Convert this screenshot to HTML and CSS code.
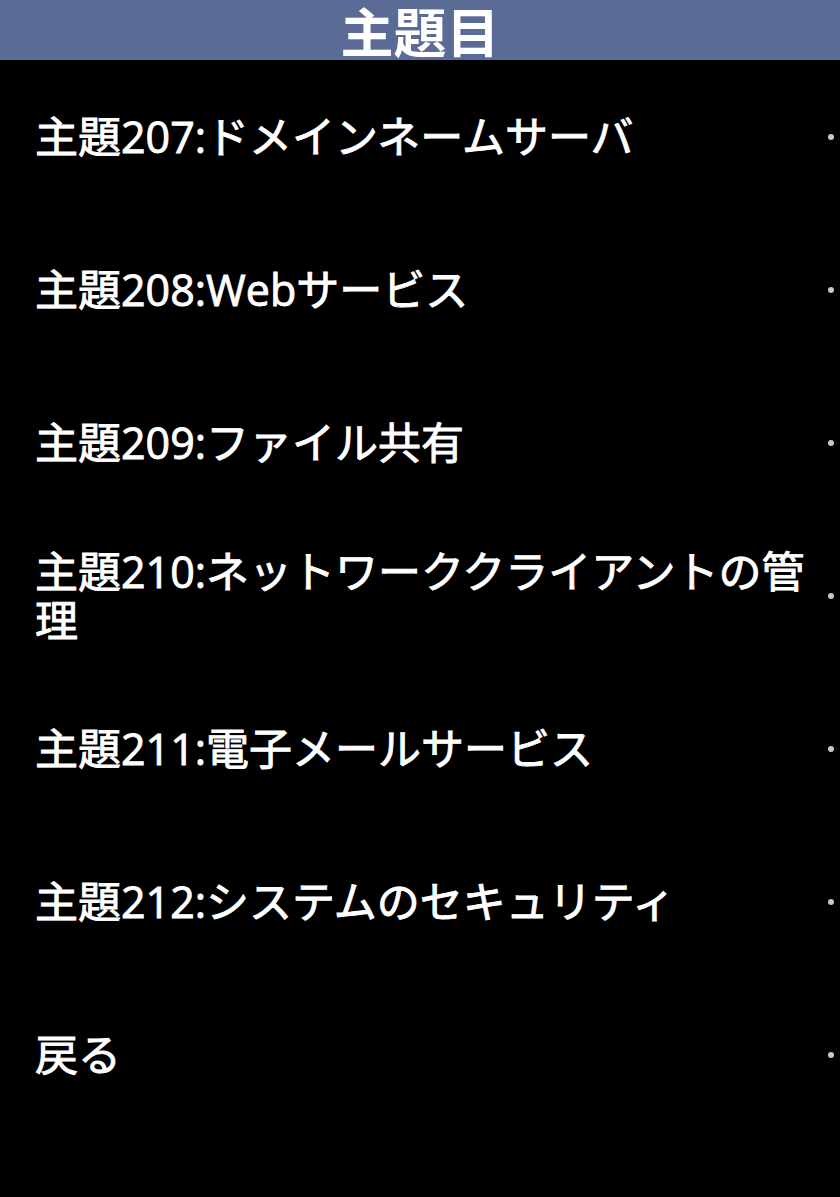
FILE: index.html
```html
<!DOCTYPE html>
<html lang="ja">
<head>
<meta charset="utf-8">
<title>主題目</title>
<link rel="stylesheet" href="styles.css">
</head>
<body>
<header class="title-bar"><h1 class="title">主題目</h1></header>
<ul class="menu">
  <li class="item"><span class="label">主題207:ドメインネームサーバ</span><span class="dot"></span></li>
  <li class="item"><span class="label">主題208:Webサービス</span><span class="dot"></span></li>
  <li class="item"><span class="label">主題209:ファイル共有</span><span class="dot"></span></li>
  <li class="item"><span class="label">主題210:ネットワーククライアントの管理</span><span class="dot"></span></li>
  <li class="item"><span class="label">主題211:電子メールサービス</span><span class="dot"></span></li>
  <li class="item"><span class="label">主題212:システムのセキュリティ</span><span class="dot"></span></li>
  <li class="item"><span class="label">戻る</span><span class="dot"></span></li>
</ul>
</body>
</html>
```
FILE: styles.css
```css
html, body {
  margin: 0;
  padding: 0;
  background: #000;
  color: #fff;
  font-family: "Open Sans", "Noto Sans CJK JP", sans-serif;
}
.title-bar {
  height: 60px;
  background: #5a6b96;
  display: flex;
  align-items: center;
  justify-content: center;
}
.title {
  margin: 0;
  font-size: 53px;
  line-height: 1;
  font-weight: 700;
  font-family: "Noto Sans CJK JP", sans-serif;
  color: #fff;
}
.menu {
  list-style: none;
  margin: 0;
  padding: 0;
}
.item {
  height: 153px;
  display: flex;
  align-items: center;
  padding-left: 35px;
}
.label {
  width: 791px;
  font-size: 43px;
  line-height: 49px;
  font-weight: 400;
  -webkit-text-stroke: 0.9px #fff;
}
.dot {
  width: 6px;
  height: 6px;
  border-radius: 50%;
  background: #c8c8c8;
  margin-left: 2px;
}
```
